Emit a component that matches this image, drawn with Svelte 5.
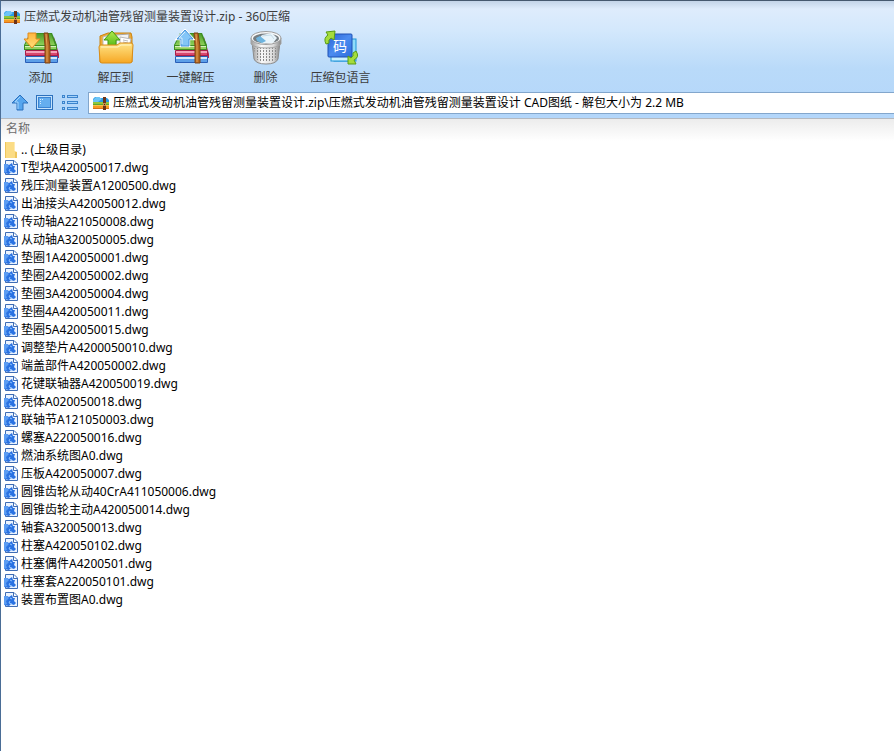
<script lang="ts">
  type Tool = {
    id: string;
    label: string;
  };

  const archive = '压燃式发动机油管残留测量装置设计';

  const tools: Tool[] = [
    { id: 'add', label: '添加' },
    { id: 'extract', label: '解压到' },
    { id: 'quick', label: '一键解压' },
    { id: 'delete', label: '删除' },
    { id: 'codepage', label: '压缩包语言' },
  ];

  const files: string[] = [
    'T型块A420050017.dwg',
    '残压测量装置A1200500.dwg',
    '出油接头A420050012.dwg',
    '传动轴A221050008.dwg',
    '从动轴A320050005.dwg',
    '垫圈1A420050001.dwg',
    '垫圈2A420050002.dwg',
    '垫圈3A420050004.dwg',
    '垫圈4A420050011.dwg',
    '垫圈5A420050015.dwg',
    '调整垫片A4200050010.dwg',
    '端盖部件A420050002.dwg',
    '花键联轴器A420050019.dwg',
    '壳体A020050018.dwg',
    '联轴节A121050003.dwg',
    '螺塞A220050016.dwg',
    '燃油系统图A0.dwg',
    '压板A420050007.dwg',
    '圆锥齿轮从动40CrA411050006.dwg',
    '圆锥齿轮主动A420050014.dwg',
    '轴套A320050013.dwg',
    '柱塞A420050102.dwg',
    '柱塞偶件A4200501.dwg',
    '柱塞套A220050101.dwg',
    '装置布置图A0.dwg',
  ];

  let path = $state(`${archive}.zip\\${archive} CAD图纸 - 解包大小为 2.2 MB`);
</script>

{#snippet zipIcon()}
  <svg class="icon16" viewBox="0 0 16 16" aria-hidden="true">
    <path d="M0 4 L2 2 H6 L7 3 H14 L16 5 V8 H0z" fill="#2b9be6" />
    <path d="M0 5 L3 2 H6 L9 4 L5 7 H0z" fill="#6cc4f6" />
    <rect y="7" width="16" height="3" fill="#8fc63c" />
    <rect y="9" width="16" height="1" fill="#5da52c" />
    <rect y="10" width="16" height="4" fill="#f59a23" />
    <rect y="10" width="16" height="1" fill="#fbc04a" />
    <rect y="13" width="16" height="1" fill="#d9701a" />
    <rect x="10" y="2" width="3" height="13" fill="#6d3418" />
    <rect x="10" y="8" width="3" height="3" fill="#c98d50" />
    <rect x="11" y="9" width="1" height="1" fill="#4a220f" />
  </svg>
{/snippet}

{#snippet books()}
  <path d="M31 8 L36 25 V29 H31z" fill="#b52850" />
  <rect x="2" y="27" width="33" height="7" rx="1" fill="#2a5fb8" />
  <rect x="3" y="28" width="31" height="2" fill="#d3e8fb" />
  <rect x="3" y="30" width="31" height="3" fill="#5c9fe8" />
  <rect x="2" y="21" width="33" height="6" rx="1" fill="#a81e48" />
  <rect x="3" y="22" width="31" height="2" fill="#f4a0b8" />
  <rect x="3" y="24" width="31" height="2" fill="#d8476e" />
  <path d="M7 4 H29 L34 16 V21 H1 V16z" fill="#3d8f22" />
  <path d="M8 5 H28 L32 16 H2z" fill="url(#bookTop)" />
  <rect x="2" y="17" width="31" height="3" fill="#94d060" />
  <rect x="2" y="17" width="31" height="1" fill="#d5f2bb" />
  <path d="M21 4 H25 L27 17 V34 H22 V17z" fill="#b86a22" stroke="#7b4214" />
  <path d="M23 5 L24 17 V33" stroke="#e0a058" fill="none" />
{/snippet}

<svelte:head>
  <title>{archive}.zip - 360压缩</title>
</svelte:head>

<div class="window">
  <header class="chrome">
    <div class="titlebar">
      {@render zipIcon()}
      <span>{archive}.zip - 360压缩</span>
    </div>

    <div class="toolbar">
      {#each tools as tool (tool.id)}
        <button class="tool" type="button">
          <svg class="tool-icon" viewBox="0 0 36 38" aria-hidden="true">
            {#if tool.id === 'add'}
              <defs>
                <linearGradient id="bookTop" x1="0" y1="0" x2="0" y2="1">
                  <stop offset="0" stop-color="#4f9d2c" />
                  <stop offset="1" stop-color="#8dd058" />
                </linearGradient>
                <linearGradient id="gold" x1="0" y1="0" x2="0" y2="1">
                  <stop offset="0" stop-color="#ffb43c" />
                  <stop offset="1" stop-color="#ffe07a" />
                </linearGradient>
              </defs>
              {@render books()}
              <path d="M5 4 H13 V10 H17 L9 19 L1 10 H5z" fill="url(#gold)" stroke="#e08a1c" />
            {:else if tool.id === 'extract'}
              <defs>
                <linearGradient id="folder" x1="0" y1="0" x2="0" y2="1">
                  <stop offset="0" stop-color="#ffe486" />
                  <stop offset="1" stop-color="#f6a724" />
                </linearGradient>
                <linearGradient id="lime" x1="0" y1="0" x2="0" y2="1">
                  <stop offset="0" stop-color="#b4ec4c" />
                  <stop offset="1" stop-color="#55b81a" />
                </linearGradient>
              </defs>
              <path d="M2 7 L10 4 H33 L34 8 V33 H2z" fill="#eeaa35" stroke="#c98312" />
              <path d="M5 8 L14 5 L18 18 H5z" fill="#fff" stroke="#b9b9b9" />
              <path d="M18 6 L31 5 L30 18 H18z" fill="#f3f3f3" stroke="#a8a8a8" />
              <path d="M22 8 L33 10 L31 18 H22z" fill="#fff" stroke="#b9b9b9" />
              <path d="M25 11 L30 12 M25 13 L30 14" stroke="#bbb" />
              <path d="M10 17 V11 H6 L14 2 L22 11 H18 V17z" fill="url(#lime)" stroke="#3f9a12" />
              <path d="M1 18 Q1 16 3 16 H19 L22 14 H33 Q35 14 35 16 L34 32 Q34 34 32 34 H4 Q2 34 2 32z" fill="url(#folder)" stroke="#d98c18" />
              <path d="M3 18 H20 L23 16 H33" stroke="#fff6c8" fill="none" />
            {:else if tool.id === 'quick'}
              {@render books()}
              <path d="M8 17 V10 H4 L12 1 L20 10 H16 V17z" fill="#83c5f7" stroke="#fff" stroke-width="2.400" />
              <path d="M8 17 V10 H4 L12 1 L20 10 H16 V17z" fill="#83c5f7" stroke="#4593dc" />
              <path d="M12 3 L6 9 H9 V15" stroke="#d5edff" fill="none" />
            {:else if tool.id === 'delete'}
              <defs>
                <linearGradient id="steel">
                  <stop offset="0" stop-color="#9b9b9b" />
                  <stop offset="0.35" stop-color="#fafafa" />
                  <stop offset="0.75" stop-color="#dcdcdc" />
                  <stop offset="1" stop-color="#858585" />
                </linearGradient>
                <pattern id="mesh" width="3" height="3" patternUnits="userSpaceOnUse">
                  <rect width="1" height="2" fill="#8a8a8a" />
                </pattern>
              </defs>
              <path d="M4 13 L6 30 Q8 35 18 35 Q28 35 30 30 L32 13z" fill="url(#steel)" stroke="#8c8c8c" />
              <path d="M6 19 L8 30 Q12 33 18 33 Q25 33 28 30 L30 19z" fill="url(#mesh)" />
              <path d="M3 9 V15 Q7 19 18 19 Q29 19 33 15 V9z" fill="url(#steel)" stroke="#a5a5a5" />
              <ellipse cx="18" cy="9" rx="15" ry="6.500" fill="#f8f8f8" stroke="#9d9d9d" />
              <ellipse cx="18" cy="9.500" rx="13" ry="5" fill="#757d82" />
              <path d="M10 11 L14 6 L24 4 L29 9 L25 14 H14z" fill="#e8f4fb" />
              <path d="M8 9 L12 7 L18 12 L14 14 L9 12z" fill="#6db4df" />
              <path d="M14 7 L23 6 L26 10" stroke="#c5dce8" fill="none" />
            {:else}
              <defs>
                <linearGradient id="blueCard" x1="0" y1="0" x2="1" y2="1">
                  <stop offset="0" stop-color="#2c62d4" />
                  <stop offset="0.5" stop-color="#4b8cf0" />
                  <stop offset="1" stop-color="#2f6ddd" />
                </linearGradient>
              </defs>
              <rect x="11" y="10" width="22" height="22" fill="#8fdcfa" stroke="#1e94d8" />
              <rect x="8" y="12" width="20" height="20" fill="#c9f0ff" stroke="#1e94d8" />
              <rect x="5" y="5" width="24" height="23" rx="1" fill="url(#blueCard)" stroke="#1f50b4" />
              <text class="glyph" x="17" y="22" text-anchor="middle">码</text>
              <path d="M3 15 Q0 9 5 6 L3 3 L12 2 L11 11 L8 9 Q5 11 6 14z" fill="#a5dc3c" stroke="#5a9c14" />
              <path d="M33 22 Q37 28 31 31 L33 35 L25 35 L25 27 L28 29 Q31 27 30 24z" fill="#a5dc3c" stroke="#5a9c14" />
            {/if}
          </svg>
          <span>{tool.label}</span>
        </button>
      {/each}
    </div>

    <div class="address">
      <button class="nav" type="button" aria-label="向上">
        <svg viewBox="0 0 18 18" aria-hidden="true">
          <path d="M6 16 V9 H1 L9 1 L17 9 H12 V16z" fill="#55a5ee" stroke="#2d71bd" />
          <path d="M7 15 V8 H4 L9 3" stroke="#a5d5fb" fill="none" />
        </svg>
      </button>
      <button class="nav" type="button" aria-label="图标视图">
        <svg viewBox="0 0 18 18" aria-hidden="true">
          <rect x="0.500" y="1.500" width="16" height="14" fill="#c4e2fc" stroke="#2d71bd" />
          <rect x="2.500" y="3.500" width="12" height="10" fill="#65aeef" stroke="#3b84d2" />
          <path d="M4 5.500 H5 M6 5.500 H7 M4 7.500 H5 M4 9.500 H5" stroke="#d4ecff" />
        </svg>
      </button>
      <button class="nav" type="button" aria-label="列表视图">
        <svg viewBox="0 0 18 18" aria-hidden="true">
          {#each [2, 8, 14] as y}
            <rect x="1.500" y={y - 0.5} width="2" height="2" fill="#a4d2fa" stroke="#3c84cd" />
            <rect x="6.500" y={y - 0.5} width="10" height="2" fill="#a4d2fa" stroke="#3c84cd" />
          {/each}
        </svg>
      </button>
      <div class="path">
        {@render zipIcon()}
        <input type="text" aria-label="路径" bind:value={path} />
      </div>
    </div>
  </header>

  <table class="files">
    <thead>
      <tr><th scope="col">名称</th></tr>
    </thead>
    <tbody>
      <tr>
        <td>
          <div class="entry">
            <svg class="icon16" viewBox="0 0 16 16" aria-hidden="true">
              <path d="M2 0 H12 V9 L14 10 V16 H2z" fill="#fbdc85" />
              <path d="M2 0 H3 V16 H2z M12 10 H14 V16 H12z" fill="#efc65c" />
              <path d="M11 0 H12 V9 H11z" fill="#fdeab2" />
            </svg>
            <span>.. (上级目录)</span>
          </div>
        </td>
      </tr>
      {#each files as file (file)}
        <tr>
          <td>
            <div class="entry">
              <svg class="icon16" viewBox="0 0 16 16" aria-hidden="true">
                <path d="M2.500 0.500 H11 L14.500 4 V14.500 H2.500z" fill="#eaf3ff" stroke="#3f6db5" />
                <path d="M10.500 1 V4.500 H14" fill="#fff" stroke="#3f6db5" />
                <path d="M1 4 L4 4 L6 5 L9 3 L10 6 L12 6 L11 9 L13 11 L11 13 L8 12 L6 14 L1 13z" fill="#2a72e2" />
                <path d="M1 4 H4 L6 6 L3 9 L4 12 L1 13z" fill="#5b9cf2" />
                <path d="M7 6 L9 7 M7 9 L6 11 L9 12" stroke="#8fc3ff" fill="none" />
              </svg>
              <span>{file}</span>
            </div>
          </td>
        </tr>
      {/each}
    </tbody>
  </table>
</div>

<style>
  :global(body) {
    margin: 0;
    background: #fff;
  }

  .window {
    box-sizing: border-box;
    min-height: 100vh;
    border-top: 1px solid #46596f;
    border-left: 1px solid #4a6d96;
    background: #fff;
    color: #000;
    font: 12px/18px "Noto Sans", "Noto Sans CJK SC", sans-serif;
  }

  button,
  input {
    margin: 0;
    padding: 0;
    border: 0;
    background: none;
    color: inherit;
    font: inherit;
  }

  .chrome {
    border-bottom: 1px solid #b4b9c0;
    background: linear-gradient(#c3d4e8, #deecfc 8px, #d3e8fc 30px, #b9daf9 68px, #b3d6fa);
    color: #3c3c3c;
  }

  .titlebar {
    display: flex;
    align-items: center;
    gap: 4px;
    height: 28px;
    padding: 4px 3px 0;
    box-sizing: border-box;
  }

  .icon16 {
    flex: none;
    width: 16px;
    height: 16px;
  }

  .toolbar {
    display: flex;
    padding: 0 2px;
  }

  .tool {
    display: flex;
    flex-direction: column;
    align-items: center;
    gap: 2px;
    width: 75px;
    white-space: nowrap;
  }

  .tool-icon {
    width: 36px;
    height: 38px;
  }

  .glyph {
    fill: #fff;
    font-size: 14px;
  }

  .address {
    display: flex;
    align-items: center;
    box-sizing: border-box;
    height: 31px;
    padding: 1px 0 0 6px;
  }

  .nav {
    width: 25px;
    height: 18px;
  }

  .nav svg {
    display: block;
    width: 18px;
    height: 18px;
    margin: 0 auto;
  }

  .path {
    display: flex;
    flex: 1;
    align-items: center;
    gap: 4px;
    height: 20px;
    margin-left: 6px;
    padding-left: 4px;
    border: 1px solid #82a6cc;
    border-right: 0;
    background: #fff;
    color: #000;
  }

  .path input {
    flex: 1;
    min-width: 0;
    outline: 0;
  }

  .files {
    width: 100%;
    border-collapse: collapse;
  }

  .files th {
    height: 20px;
    padding: 0 5px 2px;
    background: linear-gradient(#ececec, #fff);
    color: #6d6d6d;
    font-weight: normal;
    text-align: left;
  }

  .files td {
    padding: 0;
  }

  .entry {
    display: flex;
    align-items: center;
    gap: 2px;
    height: 18px;
    padding-left: 2px;
    white-space: nowrap;
  }
</style>
